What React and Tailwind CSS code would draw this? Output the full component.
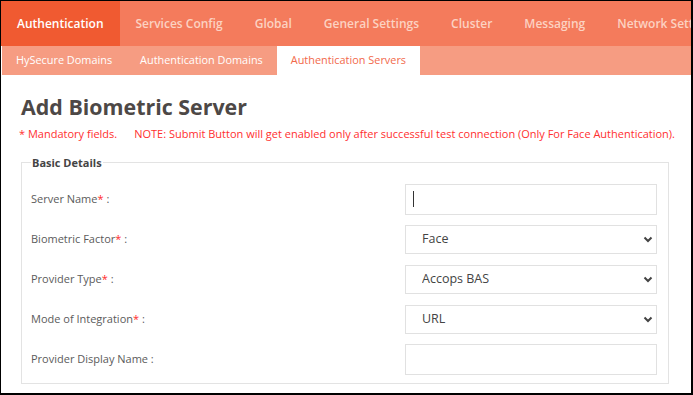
import { useState } from "react";

const topTabs = ["Authentication", "Services Config", "Global", "General Settings", "Cluster", "Messaging", "Network Settings"];
const subTabs = ["HySecure Domains", "Authentication Domains", "Authentication Servers"];

const Chevron = () => (
  <svg className="pointer-events-none absolute right-[4px] top-1/2 -translate-y-1/2" width="10" height="8" viewBox="0 0 10 8">
    <path d="M1.5 2.5 L5 6 L8.5 2.5" fill="none" stroke="#444" strokeWidth="2" />
  </svg>
);

const Label = ({ text, required }) => (
  <span className="w-[374px] text-[11px] text-[#5b5b5b]">
    {text}
    {required && <span className="text-[#ff2a2a]">*</span>} :
  </span>
);

const SelectBox = ({ value, options }) => (
  <div className="relative h-[29px] w-[252px]">
    <select
      defaultValue={value}
      className="h-full w-full appearance-none border border-[#e1e1e1] bg-white pl-[16px] text-[12.5px] text-[#444] outline-none"
    >
      {options.map((o) => (
        <option key={o}>{o}</option>
      ))}
    </select>
    <Chevron />
  </div>
);

export default function App() {
  const [active] = useState(0);

  return (
    <div
      className="h-[395px] w-[693px] overflow-hidden border-t border-l border-r-2 border-b-2 border-black bg-white"
      style={{ fontFamily: '"Open Sans", "Noto Sans", sans-serif' }}
    >
      {/* top nav */}
      <div className="flex h-[45px] overflow-hidden bg-[#f47b5c] whitespace-nowrap">
        {topTabs.map((t, i) => (
          <div
            key={t}
            className={`flex shrink-0 items-center px-4 text-[12px] font-semibold ${
              i === active ? "bg-[#f05a31] text-white" : "text-[#fcd2c2]"
            }`}
          >
            {t}
          </div>
        ))}
      </div>

      {/* sub nav */}
      <div className="ml-[1px] flex h-[29px] bg-[#f69c82] whitespace-nowrap">
        {subTabs.map((t, i) => (
          <div
            key={t}
            className={`flex items-center px-[14px] text-[10.9px] ${
              i === 2 ? "bg-white text-[#f2694b]" : "text-white"
            }`}
          >
            {t}
          </div>
        ))}
      </div>

      <div className="px-[19px]">
        <h1 className="mt-[17px] pl-[1px] text-[21.4px] font-bold leading-[30px] text-[#4d4846]">Add Biometric Server</h1>
        <p className="-ml-[1px] mt-[4px] text-[11px] text-[#ff2f2f] whitespace-nowrap">
          * Mandatory fields.<span className="ml-[17px]">NOTE: Submit Button will get enabled only after successful test connection (Only For Face Authentication).</span>
        </p>

        <fieldset className="ml-[1px] mt-[12px] w-[648px] border border-[#e3e3e3] px-[9px] pt-[8px] pb-[4px]">
          <legend className="px-[1px] text-[11px] font-bold text-[#444]">Basic Details</legend>

          <div className="flex h-[40px] items-center">
            <Label text="Server Name" required />
            <div className="relative h-[31px] w-[252px] border border-[#e1e1e1]">
              <input className="h-full w-full pl-2 text-[13px] outline-none" />
              <div className="absolute left-[7px] top-[6px] h-[16px] w-[1px] bg-[#333]" />
            </div>
          </div>
          <div className="flex h-[40px] items-center">
            <Label text="Biometric Factor" required />
            <SelectBox value="Face" options={["Face", "Fingerprint"]} />
          </div>
          <div className="flex h-[40px] items-center">
            <Label text="Provider Type" required />
            <SelectBox value="Accops BAS" options={["Accops BAS"]} />
          </div>
          <div className="flex h-[40px] items-center">
            <Label text="Mode of Integration" required />
            <SelectBox value="URL" options={["URL", "SDK"]} />
          </div>
          <div className="flex h-[40px] items-center">
            <Label text="Provider Display Name" />
            <div className="h-[31px] w-[252px] border border-[#e1e1e1]">
              <input className="h-full w-full pl-2 text-[13px] outline-none" />
            </div>
          </div>
        </fieldset>
      </div>
    </div>
  );
}
